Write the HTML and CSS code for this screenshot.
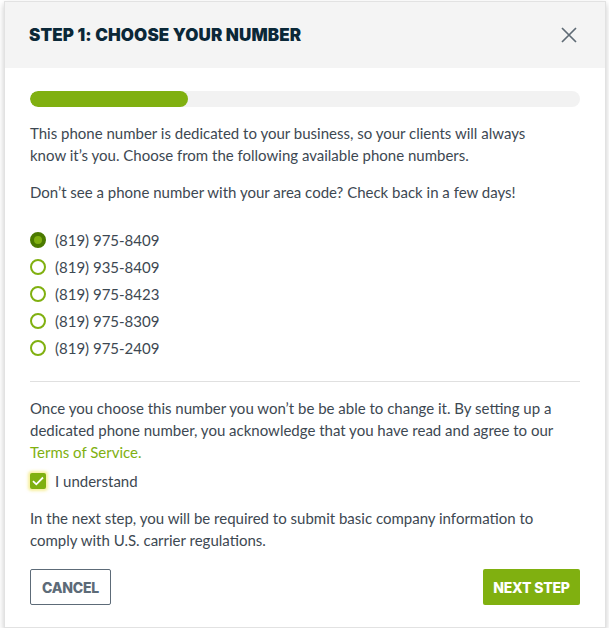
FILE: index.html
```
<!DOCTYPE html>
<html>
<head>
<meta charset="utf-8">
<link rel="stylesheet" href="styles.css">
</head>
<body>
<div class="modal">
  <div class="modal-header">
    <h1 class="title">STEP 1: CHOOSE YOUR NUMBER</h1>
    <button class="close" aria-label="Close">
      <svg width="16" height="16" viewBox="0 0 16 16"><path d="M1 1L15 15M15 1L1 15" stroke="#5f6b75" stroke-width="1.7" fill="none"/></svg>
    </button>
  </div>
  <div class="modal-body">
    <div class="progress"><div class="progress-fill"></div></div>
    <p class="text p1">This phone number is dedicated to your business, so your clients will always know it’s you. Choose from the following available phone numbers.</p>
    <p class="text p2">Don’t see a phone number with your area code? Check back in a few days!</p>
    <ul class="radios">
      <li class="radio-row"><span class="radio checked"></span>(819) 975-8409</li>
      <li class="radio-row"><span class="radio"></span>(819) 935-8409</li>
      <li class="radio-row"><span class="radio"></span>(819) 975-8423</li>
      <li class="radio-row"><span class="radio"></span>(819) 975-8309</li>
      <li class="radio-row"><span class="radio"></span>(819) 975-2409</li>
    </ul>
    <hr class="divider">
    <p class="text p3">Once you choose this number you won’t be be able to change it. By setting up a dedicated phone number, you acknowledge that you have read and agree to our <a class="link" href="#">Terms of Service.</a></p>
    <div class="check-row">
      <span class="checkbox"><svg width="12" height="10" viewBox="0 0 12 10"><path d="M1 5.2L4.3 8.3L11 1.5" stroke="#fff" stroke-width="1.8" fill="none"/></svg></span>
      I understand
    </div>
    <p class="text p4">In the next step, you will be required to submit basic company information to comply with U.S. carrier regulations.</p>
    <div class="actions">
      <button class="btn btn-cancel">CANCEL</button>
      <button class="btn btn-next">NEXT STEP</button>
    </div>
  </div>
</div>
</body>
</html>
```
FILE: styles.css
```
* { box-sizing: border-box; }
body {
  margin: 0;
  background: #fff;
  font-family: "Lato", "Liberation Sans", sans-serif;
}
.modal {
  margin: 1px 0 0 4px;
  width: 602px;
  border: 1px solid #e2e2e2;
  background: #fff;
  box-shadow: 0 3px 6px rgba(0,0,0,0.22);
}
.modal-header {
  height: 66px;
  background: #f4f4f4;
  display: flex;
  align-items: center;
  justify-content: space-between;
  padding: 0 28px 0 24px;
}
.title {
  margin: 0;
  font-family: "Inter", sans-serif;
  font-weight: 900;
  font-size: 17px;
  letter-spacing: 0.1px;
  color: #0b2838;
}
.close {
  border: 0;
  background: none;
  padding: 0;
  width: 16px;
  height: 16px;
  display: flex;
}
.modal-body {
  padding: 23px 25px 22px 25px;
}
.progress {
  height: 16px;
  border-radius: 8px;
  background: #f2f2f2;
  overflow: hidden;
}
.progress-fill {
  width: 158px;
  height: 100%;
  border-radius: 8px;
  background: #80b010;
}
.text {
  margin: 0;
  padding-right: 20px;
  font-size: 15px;
  line-height: 22px;
  color: #3d4852;
}
.p1 { margin-top: 15px; }
.p2 { margin-top: 15px; }
.radios {
  list-style: none;
  margin: 23px 0 0 0;
  padding: 0;
}
.radio-row {
  height: 27px;
  display: flex;
  align-items: center;
  font-size: 15px;
  color: #3d4852;
}
.radio {
  width: 16px;
  height: 16px;
  border-radius: 50%;
  border: 2px solid #80b010;
  margin-right: 9px;
  flex: none;
}
.radio.checked {
  border: 4.5px solid #4b7a00;
  background: #80b010;
}
.divider {
  margin: 20px 0 0 0;
  border: 0;
  border-top: 1px solid #e0e0e0;
}
.p3 { margin-top: 15px; }
.link {
  color: #80b010;
  text-decoration: none;
}
.check-row {
  margin-top: 4px;
  height: 27px;
  display: flex;
  align-items: center;
  font-size: 15px;
  color: #3d4852;
}
.checkbox {
  width: 16px;
  height: 16px;
  border-radius: 2px;
  background: #80b010;
  display: flex;
  align-items: center;
  justify-content: center;
  margin-right: 9px;
  box-shadow: 0 0 3px 2px rgba(240, 225, 80, 0.55);
}
.p4 { margin-top: 13px; }
.actions {
  margin-top: 18px;
  display: flex;
  justify-content: space-between;
}
.btn {
  height: 36px;
  font-family: "Inter", sans-serif;
  font-weight: 800;
  font-size: 14px;
  letter-spacing: -0.2px;
  border-radius: 2px;
  padding: 0;
}
.btn-cancel {
  width: 81px;
  background: #fff;
  border: 1px solid #5d6b78;
  color: #5d6b78;
}
.btn-next {
  width: 97px;
  background: #80b010;
  border: 0;
  color: #fff;
}
```
